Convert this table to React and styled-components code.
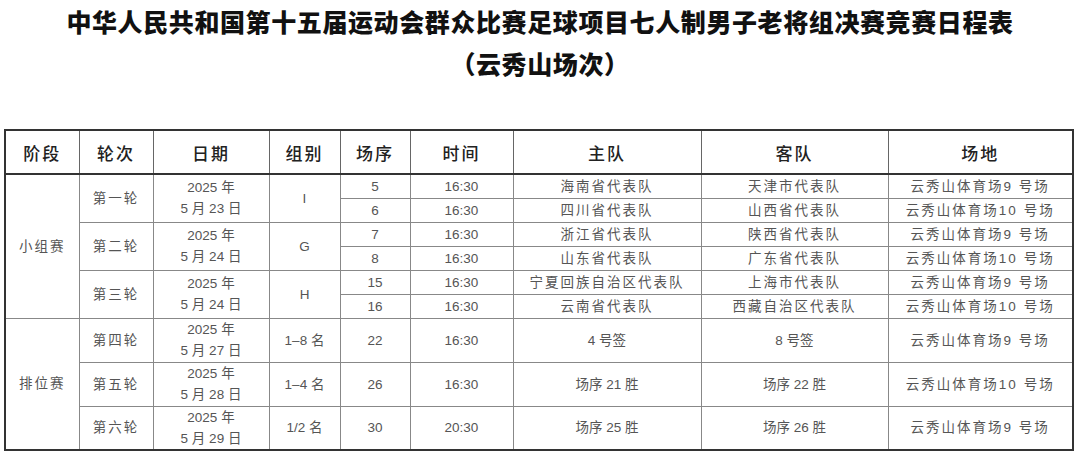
import React from "react";
import styled, { createGlobalStyle } from "styled-components";

const GlobalStyle = createGlobalStyle`
  html, body {
    margin: 0;
    padding: 0;
    background: #ffffff;
  }
  body {
    font-family: "Liberation Sans", "Noto Sans CJK SC", sans-serif;
  }
`;

const Page = styled.div`
  width: 1080px;
  height: 457px;
  overflow: hidden;
  background: #fff;
`;

const TitleBlock = styled.div`
  text-align: center;
  font-family: "Noto Sans CJK SC", sans-serif;
  font-weight: 900;
  font-size: 25px;
  line-height: 42px;
  letter-spacing: 0.6px;
  color: #111;
  margin-bottom: 45px;
`;

const Table = styled.table`
  margin-left: 4px;
  width: 1070px;
  border-collapse: collapse;
  table-layout: fixed;
  border: 2px solid #333;
`;

const HeadCell = styled.th`
  height: 42px;
  padding: 0;
  border: 1px solid #666;
  border-bottom: 2px solid #333;
  font-family: "Noto Sans CJK SC", sans-serif;
  font-weight: 500;
  font-size: 17px;
  letter-spacing: 2px;
  color: #222;
  text-align: center;
  vertical-align: middle;
`;

const Row = styled.tr`
  height: ${(p) => p.$h}px;
`;

const Cell = styled.td`
  padding: 0;
  border: 1px solid #888;
  border-top: 1px solid ${(p) => (p.$strong ? "#333" : "#999")};
  font-size: 13.5px;
  letter-spacing: ${(p) => (p.$spaced ? "2px" : "0")};
  line-height: 21px;
  color: #555;
  text-align: center;
  vertical-align: middle;
  white-space: nowrap;
  overflow: hidden;
`;

const widths = [74, 74, 116, 71, 70, 103, 188, 187];
const headers = ["阶段", "轮次", "日期", "组别", "场序", "时间", "主队", "客队", "场地"];

const groupRounds = [
  {
    round: "第一轮",
    date: ["2025 年", "5 月 23 日"],
    group: "I",
    games: [
      ["5", "16:30", "海南省代表队", "天津市代表队", "云秀山体育场9 号场"],
      ["6", "16:30", "四川省代表队", "山西省代表队", "云秀山体育场10 号场"],
    ],
  },
  {
    round: "第二轮",
    date: ["2025 年", "5 月 24 日"],
    group: "G",
    games: [
      ["7", "16:30", "浙江省代表队", "陕西省代表队", "云秀山体育场9 号场"],
      ["8", "16:30", "山东省代表队", "广东省代表队", "云秀山体育场10 号场"],
    ],
  },
  {
    round: "第三轮",
    date: ["2025 年", "5 月 24 日"],
    group: "H",
    games: [
      ["15", "16:30", "宁夏回族自治区代表队", "上海市代表队", "云秀山体育场9 号场"],
      ["16", "16:30", "云南省代表队", "西藏自治区代表队", "云秀山体育场10 号场"],
    ],
  },
];

const rankRounds = [
  ["第四轮", ["2025 年", "5 月 27 日"], "1–8 名", "22", "16:30", "4 号签", "8 号签", "云秀山体育场9 号场"],
  ["第五轮", ["2025 年", "5 月 28 日"], "1–4 名", "26", "16:30", "场序 21 胜", "场序 22 胜", "云秀山体育场10 号场"],
  ["第六轮", ["2025 年", "5 月 29 日"], "1/2 名", "30", "20:30", "场序 25 胜", "场序 26 胜", "云秀山体育场9 号场"],
];

function DateText({ lines }) {
  return (
    <>
      {lines[0]}
      <br />
      {lines[1]}
    </>
  );
}

export default function App() {
  return (
    <Page>
      <GlobalStyle />
      <TitleBlock>
        中华人民共和国第十五届运动会群众比赛足球项目七人制男子老将组决赛竞赛日程表
        <br />
        （云秀山场次）
      </TitleBlock>

      <Table>
        <colgroup>
          {widths.map((w, i) => (
            <col key={i} style={{ width: w }} />
          ))}
          <col />
        </colgroup>
        <thead>
          <tr>
            {headers.map((h) => (
              <HeadCell key={h}>{h}</HeadCell>
            ))}
          </tr>
        </thead>
        <tbody>
          {groupRounds.map((r, ri) =>
            r.games.map((g, gi) => (
              <Row $h={24} key={`${ri}-${gi}`}>
                {ri === 0 && gi === 0 && (
                  <Cell rowSpan={6} $spaced $strong>
                    小组赛
                  </Cell>
                )}
                {gi === 0 && (
                  <>
                    <Cell rowSpan={2} $spaced $strong>
                      {r.round}
                    </Cell>
                    <Cell rowSpan={2} $strong>
                      <DateText lines={r.date} />
                    </Cell>
                    <Cell rowSpan={2} $strong>
                      {r.group}
                    </Cell>
                  </>
                )}
                <Cell $strong={gi === 0}>{g[0]}</Cell>
                <Cell $strong={gi === 0}>{g[1]}</Cell>
                <Cell $strong={gi === 0} $spaced>
                  {g[2]}
                </Cell>
                <Cell $strong={gi === 0} $spaced>
                  {g[3]}
                </Cell>
                <Cell $strong={gi === 0} $spaced>
                  {g[4]}
                </Cell>
              </Row>
            ))
          )}
          {rankRounds.map((r, i) => (
            <Row $h={44} key={r[0]}>
              {i === 0 && (
                <Cell rowSpan={3} $spaced $strong>
                  排位赛
                </Cell>
              )}
              <Cell $spaced $strong>
                {r[0]}
              </Cell>
              <Cell $strong>
                <DateText lines={r[1]} />
              </Cell>
              <Cell $strong>{r[2]}</Cell>
              <Cell $strong>{r[3]}</Cell>
              <Cell $strong>{r[4]}</Cell>
              <Cell $strong>{r[5]}</Cell>
              <Cell $strong>{r[6]}</Cell>
              <Cell $strong $spaced>
                {r[7]}
              </Cell>
            </Row>
          ))}
        </tbody>
      </Table>
    </Page>
  );
}
